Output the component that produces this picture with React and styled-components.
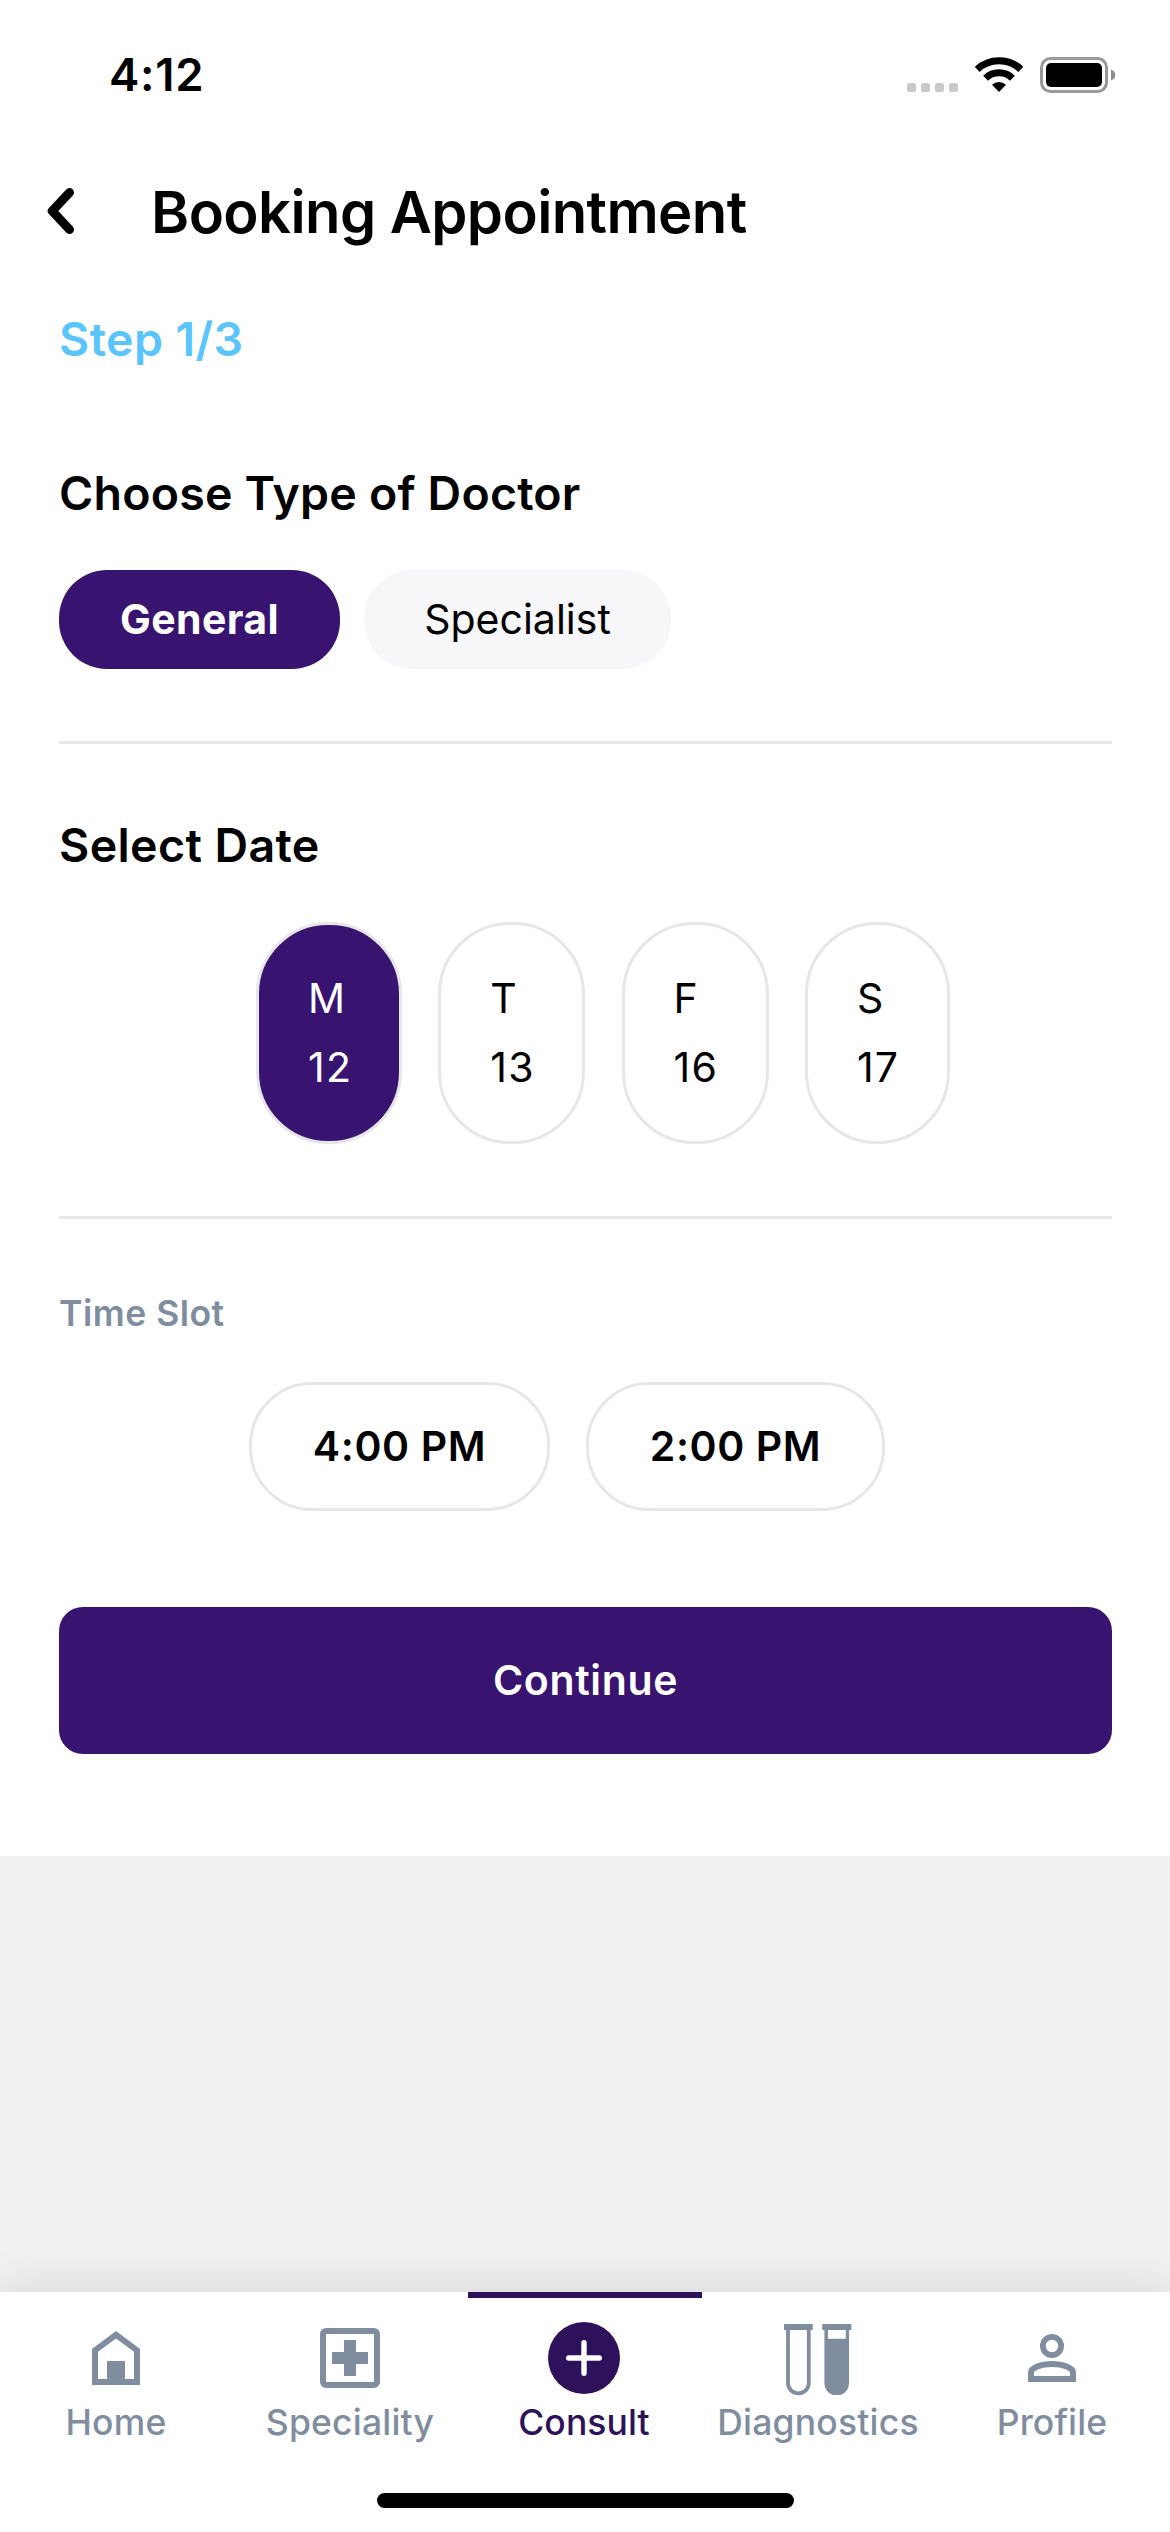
import React from "react";
import styled, { createGlobalStyle } from "styled-components";

const PURPLE = "#38136f";
const DEEP = "#2e115b";
const SLATE = "#808d9f";

const GlobalStyle = createGlobalStyle`
  *, *::before, *::after { box-sizing: border-box; }
  body { margin: 0; background: #f1f1f1; }
`;

const Screen = styled.div`
  width: 1170px;
  height: 2532px;
  display: flex;
  flex-direction: column;
  justify-content: space-between;
  overflow: hidden;
  background: #f1f1f1;
  color: #000;
  font-family: Inter, "Liberation Sans", sans-serif;
`;

const Sheet = styled.main`
  height: 1856px;
  background: #fff;
`;

const StatusBar = styled.div`
  height: 150px;
  padding: 0 54px 0 109px;
  display: flex;
  align-items: center;
  justify-content: space-between;
`;

const Clock = styled.span`
  font-size: 45.5px;
  font-weight: 600;
  line-height: 58px;
  letter-spacing: ${(p) => p.$track}px;
`;

const StatusIcons = styled.svg`
  display: block;
`;

const Header = styled.header`
  height: 124px;
  padding-left: 46px;
  display: flex;
  align-items: center;
  gap: 75px;
`;

const BackButton = styled.button`
  width: 30px;
  height: 50px;
  padding: 0;
  border: 0;
  background: none;
`;

const Title = styled.h1`
  margin: 0;
  font-size: 58px;
  font-weight: 600;
  line-height: 72px;
  letter-spacing: ${(p) => p.$track}px;
  white-space: nowrap;
`;

const Form = styled.section`
  padding: 36px 58px 0 59px;
  display: flex;
  flex-direction: column;
`;

const Heading = styled.h2`
  margin: 0;
  font-size: 46.5px;
  font-weight: 600;
  line-height: 58px;
  letter-spacing: ${(p) => p.$track}px;
`;

const Step = styled(Heading)`
  margin-bottom: 96px;
  color: #5ac4ff;
`;

const Types = styled.div`
  display: flex;
  gap: 24px;
  margin: 48px 0 72px;
`;

const TypePill = styled.button`
  width: ${(p) => p.$width}px;
  height: 99px;
  padding: 0 0 2px;
  border: 0;
  border-radius: 48px;
  background: ${(p) => (p.$active ? PURPLE : "#f7f7fa")};
  color: ${(p) => (p.$active ? "#fff" : "#000")};
  font: ${(p) => (p.$active ? 700 : 400)} 41px/50px Inter, sans-serif;
  letter-spacing: ${(p) => p.$track}px;
`;

const Divider = styled.hr`
  width: 100%;
  height: 3px;
  margin: 0 0 72px;
  border: 0;
  background: #e8e8e8;
`;

const Dates = styled.div`
  display: flex;
  gap: 36.3px;
  margin: 48px 0 72px;
  padding-left: 197px;
`;

const DatePill = styled.button`
  width: ${(p) => p.$width}px;
  height: 222px;
  padding: 0 0 2px 49px;
  border: 3px solid #e6e6eb;
  border-radius: 72px;
  background: ${(p) => (p.$active ? PURPLE : "#fff")};
  color: ${(p) => (p.$active ? "#fff" : "#000")};
  display: flex;
  flex-direction: column;
  align-items: flex-start;
  justify-content: center;
  gap: 19px;
  font: 400 41px/50px Inter, sans-serif;
  letter-spacing: ${(p) => p.$track}px;
`;

const SlotLabel = styled.h3`
  margin: 0;
  padding-top: 1px;
  color: ${SLATE};
  font-size: 35.5px;
  font-weight: 600;
  line-height: 44px;
  letter-spacing: ${(p) => p.$track}px;
`;

const Slots = styled.div`
  display: flex;
  gap: 36px;
  margin: 46px 0 96px;
  padding-left: 190px;
`;

const SlotPill = styled.button`
  width: ${(p) => p.$width}px;
  height: 129px;
  padding: 0 0 2px;
  border: 3px solid #e6e6eb;
  border-radius: 63px;
  background: #fff;
  color: #000;
  font: 600 41px/50px Inter, sans-serif;
  letter-spacing: ${(p) => p.$track}px;
`;

const Continue = styled.button`
  height: 147px;
  padding: 0 0 2px;
  border: 0;
  border-radius: 24px;
  background: ${PURPLE};
  color: #fff;
  font: 600 41px/50px Inter, sans-serif;
  letter-spacing: ${(p) => p.$track}px;
`;

const BottomNav = styled.nav`
  height: 240px;
  background: #fff;
  box-shadow: 0 0 46px rgba(0, 0, 0, 0.125);
`;

const Tabs = styled.div`
  display: flex;
  height: 201px;
`;

const Tab = styled.a`
  flex: 1 1 0;
  display: flex;
  flex-direction: column;
  align-items: center;
  padding: 24px 2px 0 0;
  border-top: 6px solid ${(p) => (p.$active ? DEEP : "transparent")};
  color: ${(p) => (p.$active ? DEEP : SLATE)};
`;

const TabIcon = styled.svg`
  display: block;
  width: 72px;
  height: 72px;
  overflow: visible;
`;

const TabLabel = styled.span`
  margin-top: 7px;
  font-size: 35.5px;
  font-weight: 500;
  line-height: 44px;
  letter-spacing: ${(p) => p.$track}px;
  white-space: nowrap;
`;

const HomeIndicator = styled.div`
  width: 417px;
  height: 15px;
  margin: 0 auto;
  border-radius: 8px;
  background: #000;
`;

const icons = {
  home: (
    <path
      fillRule="evenodd"
      fill="currentColor"
      d="M12 63V27L36 9 60 27V63ZM18 57H27V39H45V57H54V29.8L36 16.5 18 29.8Z"
    />
  ),
  speciality: (
    <>
      <rect x="9" y="9" width="54" height="54" rx="3" fill="none" stroke="currentColor" strokeWidth="6" />
      <path d="M30 18H42V30H54V42H42V54H30V42H18V30H30Z" fill="currentColor" />
    </>
  ),
  consult: (
    <>
      <circle cx="36" cy="36" r="36" fill="currentColor" />
      <path d="M36 20.7V51.3M20.7 36H51.3" stroke="#fff" strokeWidth="5.4" strokeLinecap="round" />
    </>
  ),
  diagnostics: (
    <g transform="translate(1 0)">
      <path d="M1 2H29.7V8H1ZM39.3 2H68.3V8H39.3Z" fill="currentColor" />
      <path d="M5 7V61A10.4 10.4 0 0 0 25.8 61V7" fill="none" stroke="currentColor" strokeWidth="3.8" />
      <path
        fillRule="evenodd"
        d="M41.4 7H66V61A12.3 12.3 0 0 1 57.5 73H49.9A12.3 12.3 0 0 1 41.4 61ZM45 8V16.7H62.8V8Z"
        fill="currentColor"
      />
    </g>
  ),
  profile: (
    <>
      <circle cx="36" cy="24" r="9.1" fill="none" stroke="currentColor" strokeWidth="5.8" />
      <path d="M15 57V50.5C15 46 25 42 36 42S57 46 57 50.5V57Z" fill="none" stroke="currentColor" strokeWidth="6" />
    </>
  ),
};

const types = [
  { label: "General", width: 281, track: 0.4, active: true },
  { label: "Specialist", width: 307, track: 0 },
];

const dates = [
  { day: "M", date: "12", width: 146, active: true },
  { day: "T", date: "13", width: 147 },
  { day: "F", date: "16", width: 147 },
  { day: "S", date: "17", width: 145.5 },
];

const slots = [
  { label: "4:00 PM", width: 301 },
  { label: "2:00 PM", width: 299 },
];

const tabs = [
  { id: "home", label: "Home", track: 0.2 },
  { id: "speciality", label: "Speciality", track: 0.2 },
  { id: "consult", label: "Consult", track: 0.1, active: true },
  { id: "diagnostics", label: "Diagnostics", track: 0.2 },
  { id: "profile", label: "Profile", track: 0.1 },
];

function Indicators() {
  return (
    <StatusIcons width="209" height="40" viewBox="907 54 209 40">
      {[907, 921, 935, 949].map((x) => (
        <rect key={x} x={x} y="82" width="9" height="9" rx="2.6" fill="#c9c9c9" />
      ))}
      <g fill="none" stroke="#000">
        <path d="M977.2 68.3A32 32 0 0 1 1020.8 68.3" strokeWidth="7.2" />
        <path d="M985.6 77.2A19.4 19.4 0 0 1 1012.4 77.2" strokeWidth="7" />
      </g>
      <path d="M999 91L992 83.8A10 10 0 0 1 1006 83.8Z" fill="#000" />
      <rect x="1041.5" y="57.5" width="65" height="33" rx="9" fill="none" stroke="#999" strokeWidth="3" />
      <rect x="1046" y="62" width="56" height="24" rx="5" fill="#000" />
      <path d="M1111 68.5Q1115.3 70 1115.3 74T1111 79.5Z" fill="#8c8c8c" />
    </StatusIcons>
  );
}

export default function App() {
  return (
    <Screen>
      <GlobalStyle />
      <Sheet>
        <StatusBar>
          <Clock $track={0.7}>4:12</Clock>
          <Indicators />
        </StatusBar>
        <Header>
          <BackButton aria-label="Back">
            <svg width="30" height="50" viewBox="0 0 30 50" fill="none" stroke="#000" strokeWidth="9" strokeLinecap="round" strokeLinejoin="round">
              <path d="M23.5 5.5L6.2 24 23.5 42.5" />
            </svg>
          </BackButton>
          <Title $track={-0.6}>Booking Appointment</Title>
        </Header>
        <Form>
          <Step as="p" $track={0.4}>Step 1/3</Step>
          <Heading $track={0.2}>Choose Type of Doctor</Heading>
          <Types>
            {types.map((t) => (
              <TypePill key={t.label} $width={t.width} $active={t.active} $track={t.track}>
                {t.label}
              </TypePill>
            ))}
          </Types>
          <Divider />
          <Heading $track={0.4}>Select Date</Heading>
          <Dates>
            {dates.map((d) => (
              <DatePill key={d.date} $width={d.width} $active={d.active} $track={1.2}>
                <span>{d.day}</span>
                <span>{d.date}</span>
              </DatePill>
            ))}
          </Dates>
          <Divider />
          <SlotLabel $track={0.5}>Time Slot</SlotLabel>
          <Slots>
            {slots.map((s) => (
              <SlotPill key={s.label} $width={s.width} $track={0.6}>
                {s.label}
              </SlotPill>
            ))}
          </Slots>
          <Continue $track={0.65}>Continue</Continue>
        </Form>
      </Sheet>
      <BottomNav>
        <Tabs>
          {tabs.map((t) => (
            <Tab key={t.id} $active={t.active}>
              <TabIcon viewBox="0 0 72 72">{icons[t.id]}</TabIcon>
              <TabLabel $track={t.track}>{t.label}</TabLabel>
            </Tab>
          ))}
        </Tabs>
        <HomeIndicator />
      </BottomNav>
    </Screen>
  );
}
